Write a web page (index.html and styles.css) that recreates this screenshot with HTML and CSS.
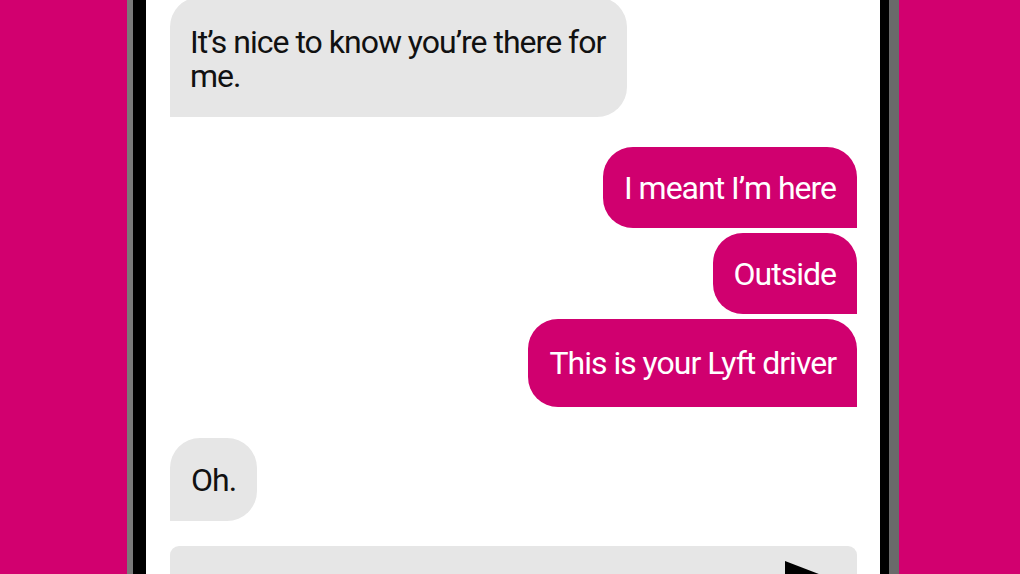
FILE: index.html
```html
<!DOCTYPE html>
<html lang="en">
<head>
  <meta charset="UTF-8">
  <title>Chat</title>
  <link rel="stylesheet" href="styles.css">
</head>
<body>
<div class="phone">
  <div class="screen">
    <div class="messages">
      <div class="bubble incoming first">It’s nice to know you’re there for<br>me.</div>

      <div class="group">
        <div class="bubble outgoing">I meant I’m here</div>
        <div class="bubble outgoing">Outside</div>
        <div class="bubble outgoing tall">This is your Lyft driver</div>
      </div>

      <div class="bubble incoming short">Oh.</div>
    </div>

    <div class="composer">
      <svg class="send" width="56" height="44" viewBox="0 0 56 44">
        <polygon points="0,0 52,20 0,40" fill="#000" />
      </svg>
    </div>
  </div>
</div>
</body>
</html>
```

FILE: styles.css
```css
body {
  margin: 0;
  height: 100vh;
  overflow: hidden;
  background: #d2006f;

  font-family: 'Roboto', 'Liberation Sans', sans-serif;
  color: #111111;

  -webkit-font-smoothing: antialiased;
}

.phone {
  box-sizing: border-box;
  width: 772px;
  height: 100vh;
  margin-left: 127px;
  padding: 0 9px 0 13px;
  background: #000;
  border-left: 6px solid #7a7a7a;
  border-right: 10px solid #6a6a6a;
}

.screen {
  display: flex;
  flex-direction: column;
  height: 100%;
  overflow: hidden;
  padding: 0 23px 0 24px;
  background: #ffffff;
}

.messages {
  display: flex;
  flex-direction: column;
  align-items: flex-start;
  gap: 30px;
}

.group {
  display: flex;
  flex-direction: column;
  align-items: flex-end;
  align-self: stretch;
  gap: 5px;
}

.bubble {
  padding: 24px 21px 23px;
  font-size: 32px;
  line-height: 34px;
  letter-spacing: -1px;
  border-radius: 30px;
}

.incoming {
  background: #e6e6e6;
  border-bottom-left-radius: 0;
}

.incoming.first {
  margin-top: -3px;
  padding: 28px 22px 24px 20px;
}

.incoming.short {
  margin-top: 1px;
  padding-top: 25px;
  padding-bottom: 24px;
}

.outgoing {
  background: #d0006f;
  color: #ffffff;
  border-bottom-right-radius: 0;
}

.outgoing.tall {
  padding-top: 27px;
  padding-bottom: 27px;
}

.composer {
  flex: 1;
  min-height: 0;
  overflow: hidden;
  display: flex;
  justify-content: flex-end;
  align-items: flex-start;
  margin-top: 25px;
  padding: 15px 16px 0 0;
  background: #e6e6e6;
  border-radius: 9px 9px 0 0;
}

.send {
  flex-shrink: 0;
}
```
